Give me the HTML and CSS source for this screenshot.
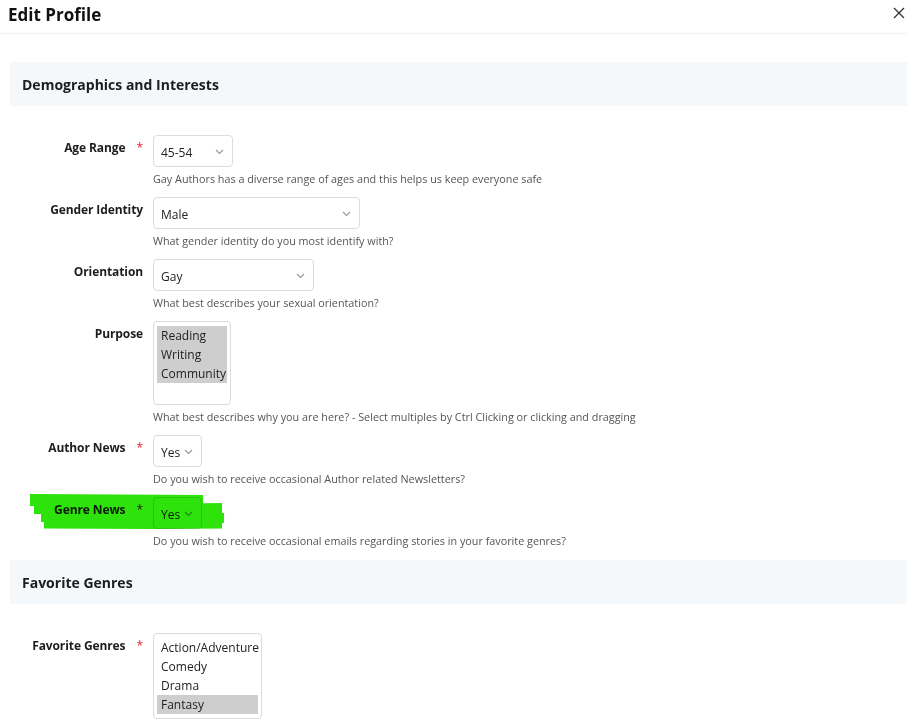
FILE: index.html
```html
<!DOCTYPE html>
<html lang="en">
<head>
<meta charset="UTF-8" />
<title>Edit Profile</title>
<link rel="stylesheet" href="styles.css">
</head>
<body>

<div class="modal-header">
    <h1 class="modal-title">Edit Profile</h1>
    <button class="close-btn" aria-label="Close">
        <svg width="12" height="12" viewBox="0 0 12 12"><path d="M1 1 L11 11 M11 1 L1 11" stroke="#333" stroke-width="1.3" fill="none"/></svg>
    </button>
</div>

<div class="modal-body">
    <div class="section-bar">Demographics and Interests</div>

    <div class="form-row">
        <div class="label">Age Range <span class="req">*</span></div>
        <div class="field">
            <div class="select w-age"><span>45-54</span><svg class="chev" width="9" height="6" viewBox="0 0 9 6"><path d="M1 1 L4.5 4.5 L8 1" stroke="#999" stroke-width="1.1" fill="none"/></svg></div>
            <div class="help">Gay Authors has a diverse range of ages and this helps us keep everyone safe</div>
        </div>
    </div>

    <div class="form-row">
        <div class="label">Gender Identity</div>
        <div class="field">
            <div class="select w-gender"><span>Male</span><svg class="chev" width="9" height="6" viewBox="0 0 9 6"><path d="M1 1 L4.5 4.5 L8 1" stroke="#999" stroke-width="1.1" fill="none"/></svg></div>
            <div class="help">What gender identity do you most identify with?</div>
        </div>
    </div>

    <div class="form-row">
        <div class="label">Orientation</div>
        <div class="field">
            <div class="select w-orient"><span>Gay</span><svg class="chev" width="9" height="6" viewBox="0 0 9 6"><path d="M1 1 L4.5 4.5 L8 1" stroke="#999" stroke-width="1.1" fill="none"/></svg></div>
            <div class="help">What best describes your sexual orientation?</div>
        </div>
    </div>

    <div class="form-row">
        <div class="label">Purpose</div>
        <div class="field">
            <div class="multi w-purpose">
                <div class="opt selected">Reading</div>
                <div class="opt selected">Writing</div>
                <div class="opt selected">Community</div>
            </div>
            <div class="help">What best describes why you are here? - Select multiples by Ctrl Clicking or clicking and dragging</div>
        </div>
    </div>

    <div class="form-row">
        <div class="label">Author News <span class="req">*</span></div>
        <div class="field">
            <div class="select w-yes"><span>Yes</span><svg class="chev" width="9" height="6" viewBox="0 0 9 6"><path d="M1 1 L4.5 4.5 L8 1" stroke="#999" stroke-width="1.1" fill="none"/></svg></div>
            <div class="help">Do you wish to receive occasional Author related Newsletters?</div>
        </div>
    </div>

    <div class="form-row marked">
        <div class="label">Genre News <span class="req">*</span></div>
        <div class="field">
            <div class="select w-yes"><span>Yes</span><svg class="chev" width="9" height="6" viewBox="0 0 9 6"><path d="M1 1 L4.5 4.5 L8 1" stroke="#999" stroke-width="1.1" fill="none"/></svg></div>
            <div class="help">Do you wish to receive occasional emails regarding stories in your favorite genres?</div>
        </div>
        <!-- highlighter scribble over the row -->
        <svg class="marker" width="205" height="42" viewBox="25 490 205 42">
            <path d="M30 500 L120 500.5 L203 501" stroke-width="12"/>
            <path d="M34 509 L130 509 L222 508" stroke-width="10"/>
            <path d="M41 517 L140 517 L224 518" stroke-width="10"/>
            <path d="M44 524 L150 524.5 L222 524" stroke-width="9"/>
        </svg>
    </div>

    <div class="section-bar">Favorite Genres</div>

    <div class="form-row">
        <div class="label">Favorite Genres <span class="req">*</span></div>
        <div class="field">
            <div class="multi w-genres">
                <div class="opt">Action/Adventure</div>
                <div class="opt">Comedy</div>
                <div class="opt">Drama</div>
                <div class="opt selected">Fantasy</div>
            </div>
        </div>
    </div>
</div>

</body>
</html>
```

FILE: styles.css
```css
body {
    margin: 0;
    padding: 0;
    background: #fff;
    color: #212529;
    font-family: 'Open Sans', 'Noto Sans', sans-serif;
    overflow: hidden;
}

.modal-header {
    display: flex;
    align-items: center;
    justify-content: space-between;
    height: 34px;
    padding: 0 0 0 8px;
    border-bottom: 1px solid #f1f1f1;
    box-sizing: border-box;
}

.modal-title {
    margin: 0 0 4px;
    font-size: 17px;
    font-weight: 700;
    color: #111;
}

.close-btn {
    background: none;
    border: none;
    padding: 0;
    margin: 0 2px 7px 0;
    display: flex;
}

.modal-body {
    padding: 28px 0 0 10px;
}

.section-bar {
    height: 44px;
    display: flex;
    align-items: center;
    padding-left: 12px;
    background: #f4f8fb;
    font-size: 14px;
    font-weight: 700;
    color: #1d1d1d;
    margin-bottom: 29px;
}

.form-row {
    position: relative;
    display: grid;
    grid-template-columns: 133px 1fr;
    gap: 10px;
    margin-bottom: 11px;
}

.form-row.marked {
    margin-bottom: 12px;
}

.label {
    text-align: right;
    font-size: 12px;
    font-weight: 700;
    line-height: 18px;
    padding-top: 4px;
    color: #1d1d1d;
    letter-spacing: -0.1px;
}

.label .req {
    color: #d9292b;
    font-weight: 400;
    margin-left: 8px;
}

.select {
    display: flex;
    align-items: center;
    justify-content: space-between;
    height: 32px;
    box-sizing: border-box;
    border: 1px solid #dcdcdc;
    border-radius: 4px;
    padding: 2px 8px 0 7px;
    font-size: 12px;
    color: #222;
    background: #fff;
}

.w-age { width: 80px; }
.w-gender { width: 207px; }
.w-orient { width: 161px; }
.w-yes { width: 49px; }

.help {
    margin-top: 4px;
    font-size: 10.8px;
    line-height: 15px;
    color: #555;
}

.multi {
    box-sizing: border-box;
    border: 1px solid #dcdcdc;
    border-radius: 4px;
    padding: 4px 3px;
    font-size: 12px;
    color: #222;
}

.w-purpose { width: 78px; height: 84px; }
.w-genres { width: 109px; height: 86px; }

.multi .opt {
    line-height: 19px;
    padding-left: 4px;
}

.multi .opt.selected {
    background: #cecece;
}

.marker {
    position: absolute;
    left: 15px;
    top: -7px;
    mix-blend-mode: multiply;
    pointer-events: none;
}

.marker path {
    stroke: #2ee20c;
    fill: none;
    stroke-linecap: butt;
}
```
